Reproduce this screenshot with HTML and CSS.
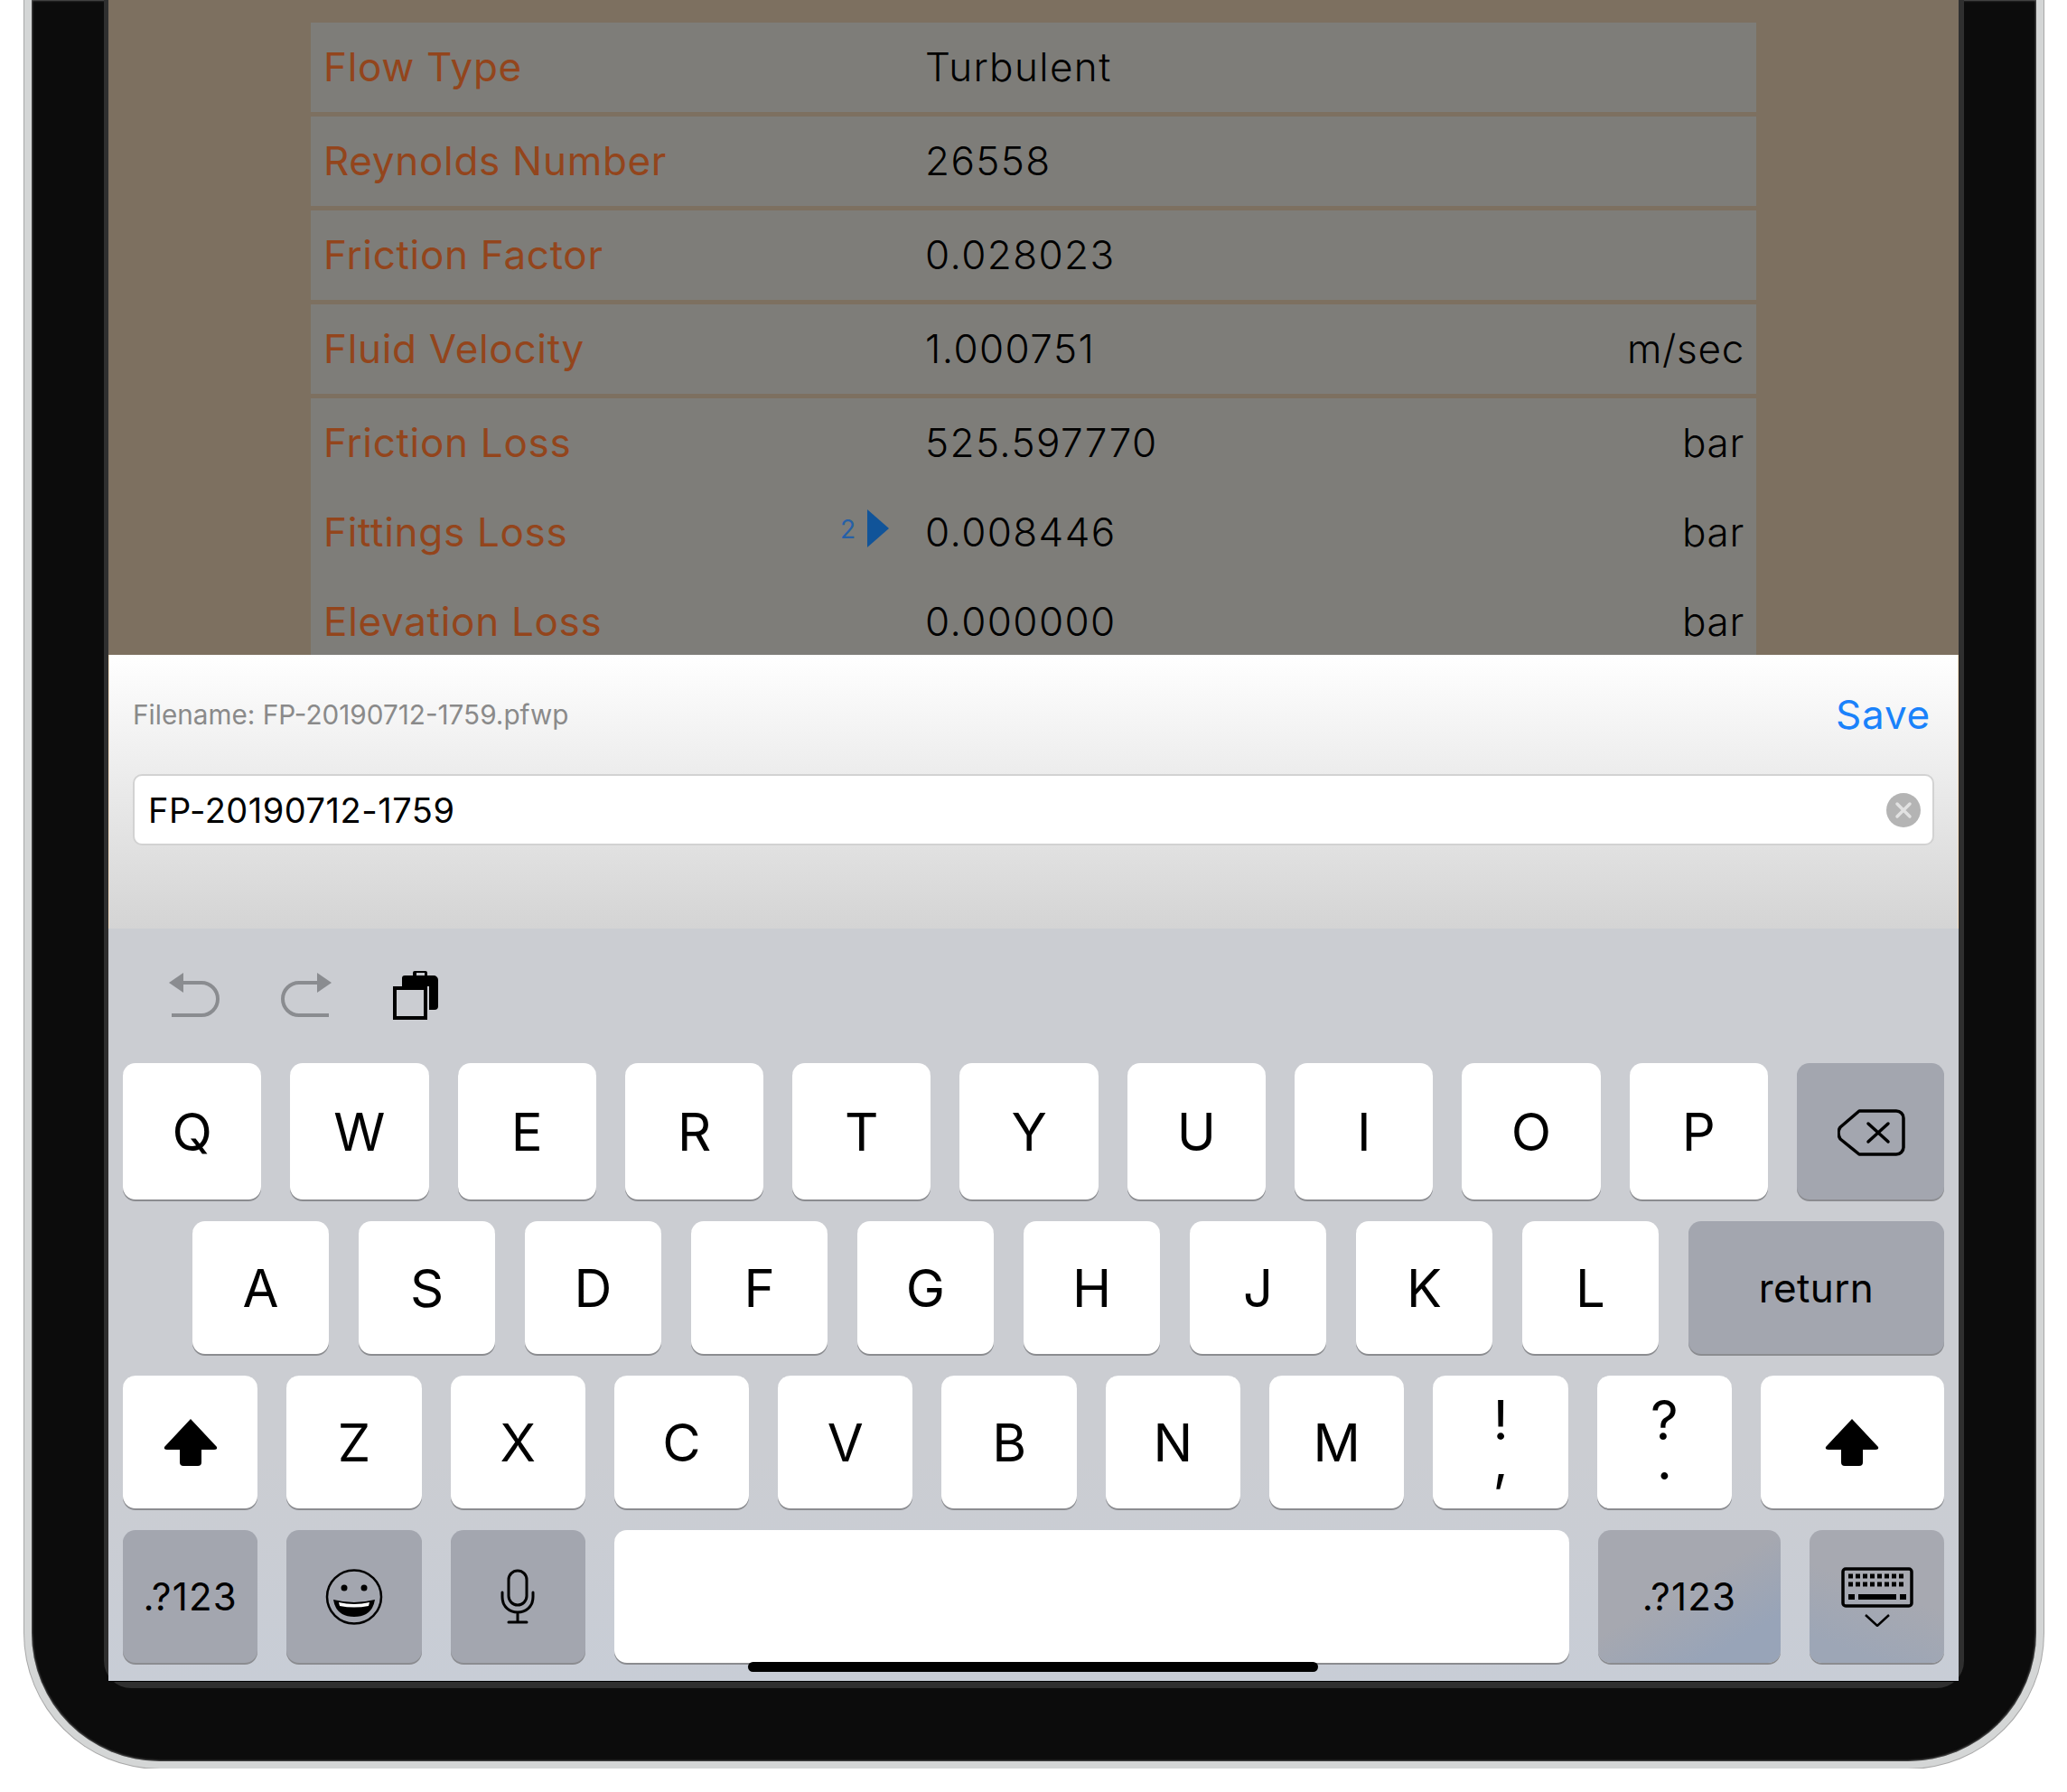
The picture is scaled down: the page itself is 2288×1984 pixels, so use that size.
FILE: index.html
```html
<!DOCTYPE html>
<html lang="en">
<head>
    <meta charset="UTF-8">
    <title>Save File</title>
    <link rel="stylesheet" href="styles.css">
</head>
<body>

    <div class="device">
        <div class="bezel">
            <div class="screen">

                <!-- Results behind the sheet -->
                <div class="results">
                    <div class="block">
                        <div class="row"><div class="label">Flow Type</div><div class="value">Turbulent</div></div>
                    </div>
                    <div class="block">
                        <div class="row"><div class="label">Reynolds Number</div><div class="value">26558</div></div>
                    </div>
                    <div class="block">
                        <div class="row"><div class="label">Friction Factor</div><div class="value">0.028023</div></div>
                    </div>
                    <div class="block">
                        <div class="row"><div class="label">Fluid Velocity</div><div class="value">1.000751</div><div class="unit">m/sec</div></div>
                    </div>
                    <div class="block">
                        <div class="row"><div class="label">Friction Loss</div><div class="value">525.597770</div><div class="unit">bar</div></div>
                        <div class="row">
                            <div class="label">Fittings Loss
                                <span class="marker"><span class="marker-count">2</span><span class="marker-arrow"></span></span>
                            </div>
                            <div class="value">0.008446</div><div class="unit">bar</div>
                        </div>
                        <div class="row"><div class="label">Elevation Loss</div><div class="value">0.000000</div><div class="unit">bar</div></div>
                    </div>
                </div>

                <!-- Save sheet -->
                <div class="sheet">
                    <div class="sheet-head">
                        <span class="filename">Filename: FP-20190712-1759.pfwp</span>
                        <span class="save">Save</span>
                    </div>
                    <div class="field">
                        <span class="field-text">FP-20190712-1759</span>
                        <svg class="clear" width="38" height="38" viewBox="0 0 38 38">
                            <circle cx="19" cy="19" r="19" fill="#b4b4b4"/>
                            <path d="M12 12L26 26M26 12L12 26" stroke="#e2e2e2" stroke-width="3.5" stroke-linecap="round"/>
                        </svg>
                    </div>
                </div>

                <!-- Keyboard -->
                <div class="keyboard">
                    <div class="toolbar">
                        <svg class="tool" width="56" height="50" viewBox="0 0 56 50">
                            <path d="M0 11L16 0V22Z" fill="#8a8c90"/>
                            <path d="M14 11H36A17 17 0 0 1 36 47H3" fill="none" stroke="#8a8c90" stroke-width="4"/>
                        </svg>
                        <svg class="tool" width="56" height="50" viewBox="0 0 56 50">
                            <g transform="translate(56 0) scale(-1 1)">
                                <path d="M0 11L16 0V22Z" fill="#8a8c90"/>
                                <path d="M14 11H36A17 17 0 0 1 36 47H3" fill="none" stroke="#8a8c90" stroke-width="4"/>
                            </g>
                        </svg>
                        <svg class="tool tool-paste" width="50" height="54" viewBox="0 0 50 54">
                            <path d="M10 8a3 3 0 0 1 3-3h9V2a2 2 0 0 1 2-2h12a2 2 0 0 1 2 2v3h7a5 5 0 0 1 5 5v29a4 4 0 0 1-4 4h-6V17H10Z" fill="#000"/>
                            <rect x="26" y="2" width="9" height="3" fill="#c9cbd0"/>
                            <rect x="2" y="19" width="34" height="33" fill="#cbcdd2" stroke="#000" stroke-width="4"/>
                        </svg>
                    </div>

                    <div class="keys">
                        <div class="key-row row-top">
                            <div class="key">Q</div><div class="key">W</div><div class="key">E</div><div class="key">R</div><div class="key">T</div>
                            <div class="key">Y</div><div class="key">U</div><div class="key">I</div><div class="key">O</div><div class="key">P</div>
                            <div class="key key-dark key-delete">
                                <svg class="delete-icon" width="75" height="54" viewBox="0 0 75 54">
                                    <path d="M24 3H65a8 8 0 0 1 8 8V43a8 8 0 0 1-8 8H24L3 34Q-1 27 3 21Z" fill="none" stroke="#000" stroke-width="3.5" stroke-linejoin="round"/>
                                    <path d="M34 17L56 37M56 17L34 37" stroke="#000" stroke-width="3.5" stroke-linecap="round"/>
                                </svg>
                            </div>
                        </div>

                        <div class="key-row row-home">
                            <div class="key">A</div><div class="key">S</div><div class="key">D</div><div class="key">F</div><div class="key">G</div>
                            <div class="key">H</div><div class="key">J</div><div class="key">K</div><div class="key">L</div>
                            <div class="key key-dark key-return">return</div>
                        </div>

                        <div class="key-row row-bottom">
                            <div class="key">
                                <svg width="60" height="54" viewBox="0 0 60 54"><path d="M30 1L59 32Q60 35 56 35H42V49a4 4 0 0 1-4 4H22a4 4 0 0 1-4-4V35H4Q0 35 1 32Z" fill="#000"/></svg>
                            </div>
                            <div class="key">Z</div><div class="key">X</div><div class="key">C</div><div class="key">V</div>
                            <div class="key">B</div><div class="key">N</div><div class="key">M</div>
                            <div class="key key-stack"><div>!<br>,</div></div>
                            <div class="key key-stack"><div>?<br>.</div></div>
                            <div class="key key-shift">
                                <svg width="60" height="54" viewBox="0 0 60 54"><path d="M30 1L59 32Q60 35 56 35H42V49a4 4 0 0 1-4 4H22a4 4 0 0 1-4-4V35H4Q0 35 1 32Z" fill="#000"/></svg>
                            </div>
                        </div>

                        <div class="key-row row-space">
                            <div class="key key-dark key-small key-fixed">.?123</div>
                            <div class="key key-dark key-fixed">
                                <svg width="64" height="62" viewBox="0 0 64 62">
                                    <ellipse cx="32" cy="31" rx="30" ry="29.5" fill="none" stroke="#000" stroke-width="2.5"/>
                                    <circle cx="21" cy="21" r="3.5"/>
                                    <circle cx="43" cy="21" r="3.5"/>
                                    <path d="M9 34Q32 40 55 34Q52 53 32 53Q12 53 9 34Z" fill="#000"/>
                                    <path d="M15 37Q32 41 49 37L48 41Q32 44 16 41Z" fill="#fff"/>
                                </svg>
                            </div>
                            <div class="key key-dark key-fixed">
                                <svg width="38" height="62" viewBox="0 0 38 62">
                                    <rect x="9" y="2" width="20" height="38" rx="10" fill="none" stroke="#000" stroke-width="3"/>
                                    <path d="M2 26V31C2 42 10 48 19 48S36 42 36 31V26M19 48V59M9 59H29" fill="none" stroke="#000" stroke-width="3" stroke-linecap="round"/>
                                </svg>
                            </div>
                            <div class="key"></div>
                            <div class="key key-dark key-small key-num">.?123</div>
                            <div class="key key-dark key-hide">
                                <svg width="80" height="66" viewBox="0 0 80 66">
                                    <rect x="2" y="2" width="76" height="41" rx="3" fill="none" stroke="#000" stroke-width="3.5"/>
                                    <path d="M8 10H72M8 19H72" stroke="#000" stroke-width="5" stroke-dasharray="5 3"/>
                                    <path d="M8 33H15M19 33H61M65 33H72" stroke="#000" stroke-width="6"/>
                                    <path d="M27 53L40 65L53 53" fill="none" stroke="#000" stroke-width="2.5"/>
                                </svg>
                            </div>
                        </div>
                    </div>

                    <div class="home-bar"></div>
                </div>

            </div>
        </div>
    </div>

</body>
</html>
```

FILE: styles.css
```css
body {
    margin: 0;
    background: #fff;
    font-family: Inter, "Liberation Sans", sans-serif;
}

.device {
    box-sizing: border-box;
    width: 2235px;
    height: 1958px;
    margin-left: 27px;
    padding: 0 80px;
    background: #0c0c0c;
    border: 8px solid #d4d6d6;
    border-top: none;
    border-radius: 0 0 150px 150px;
    box-shadow: 0 0 0 1px #a8a8a8, inset 0 0 2px 1px #555;
}

.bezel {
    background: #2f2f2f;
    padding: 0 5px 7px;
    border-radius: 0 0 30px 30px;
}

.screen {
    position: relative;
    width: 2048px;
    height: 1862px;
    overflow: hidden;
}

/* Results table, dimmed */
.results {
    box-sizing: border-box;
    height: 725px;
    padding: 25px 224px 0;
    overflow: hidden;
    background: #7d7060;
}

.block {
    margin-bottom: 5px;
    background: #7e7d79;
}

.row {
    display: flex;
    align-items: center;
    height: 99px;
    padding: 0 13px 0 14px;
    font-size: 44px;
    line-height: 48px;
    letter-spacing: 0.7px;
    font-weight: 300;
    color: #000;
}

.label {
    display: flex;
    align-items: center;
    justify-content: space-between;
    width: 666px;
    padding-bottom: 2px;
    color: #93451c;
    font-weight: 400;
}

.value {
    flex: 1;
    padding-bottom: 2px;
    letter-spacing: 1.4px;
}

.unit {
    padding-bottom: 2px;
}

.marker {
    display: flex;
    align-items: center;
    margin-right: 40px;
    letter-spacing: 0;
}

.marker-count {
    margin: 0 13px 5px 0;
    font-size: 28px;
    color: #2560a8;
}

.marker-arrow {
    width: 0;
    height: 0;
    margin-bottom: 8px;
    border-left: 24px solid #115499;
    border-top: 21px solid transparent;
    border-bottom: 21px solid transparent;
}

/* Save sheet */
.sheet {
    box-sizing: border-box;
    height: 303px;
    padding: 0 26px;
    background: linear-gradient(#fff, #d4d4d4);
    border-left: 1px solid #f3dcc0;
    border-right: 1px solid #f3dcc0;
}

.sheet-head {
    display: flex;
    align-items: center;
    justify-content: space-between;
    height: 132px;
    padding-right: 4px;
}

.filename {
    font-size: 29.7px;
    color: #8a8a8a;
}

.save {
    font-size: 44px;
    letter-spacing: 0.8px;
    color: #1a82fb;
}

.field {
    display: flex;
    align-items: center;
    justify-content: space-between;
    box-sizing: border-box;
    height: 79px;
    padding: 0 13px 0 15px;
    background: #fff;
    border: 2px solid #d2d2d2;
    border-radius: 10px;
}

.field-text {
    font-size: 38px;
    letter-spacing: 0.5px;
    color: #000;
}

/* Keyboard */
.keyboard {
    box-sizing: border-box;
    height: 834px;
    padding: 0 16px;
    background: linear-gradient(#cbcdd2 70%, #c8cdd6);
    border-bottom: 1px solid #000;
}

.toolbar {
    display: flex;
    align-items: flex-start;
    gap: 68px;
    height: 149px;
    padding: 49px 0 0 51px;
    box-sizing: border-box;
}

.tool-paste {
    margin-top: -2px;
}

.keys {
    display: flex;
    flex-direction: column;
    gap: 24px;
}

.key-row {
    display: flex;
    gap: 32px;
    height: 147px;
}

.row-top {
    height: 151px;
}

.row-home {
    padding-left: 77px;
    gap: 33px;
}

.key {
    flex: 1;
    display: flex;
    align-items: center;
    justify-content: center;
    background: #fff;
    border-radius: 14px;
    box-shadow: 0 2px 0 #8b8c90;
    font-size: 58px;
    color: #000;
}

.key-dark {
    background: #a3a6af;
}

.key-delete {
    flex: none;
    width: 163px;
}

.delete-icon {
    margin: 2px 0 0 2px;
}

.row-home .key {
    flex: none;
    width: 151px;
}

.row-home .key-return {
    flex: 1;
    width: auto;
    font-size: 44px;
    letter-spacing: 0.4px;
}

.key-shift {
    flex: none;
    width: 203px;
}

.key-small {
    font-size: 42px;
    letter-spacing: 1.2px;
}

.key-fixed {
    flex: none;
    width: 149.3px;
}

.key-num {
    flex: none;
    width: 202px;
    background: linear-gradient(150deg, #a6a8b0 45%, #98a4b8 80%);
}

.key-hide {
    flex: none;
    width: 149px;
    background: linear-gradient(200deg, #a7a9b1 45%, #9da6b6 85%);
}

.key-stack {
    padding-bottom: 6px;
    box-sizing: border-box;
    font-size: 60px;
    line-height: 44px;
    text-align: center;
}

.home-bar {
    position: absolute;
    left: 708px;
    bottom: 11px;
    width: 631px;
    height: 11px;
    background: #000;
    border-radius: 6px;
}
```
